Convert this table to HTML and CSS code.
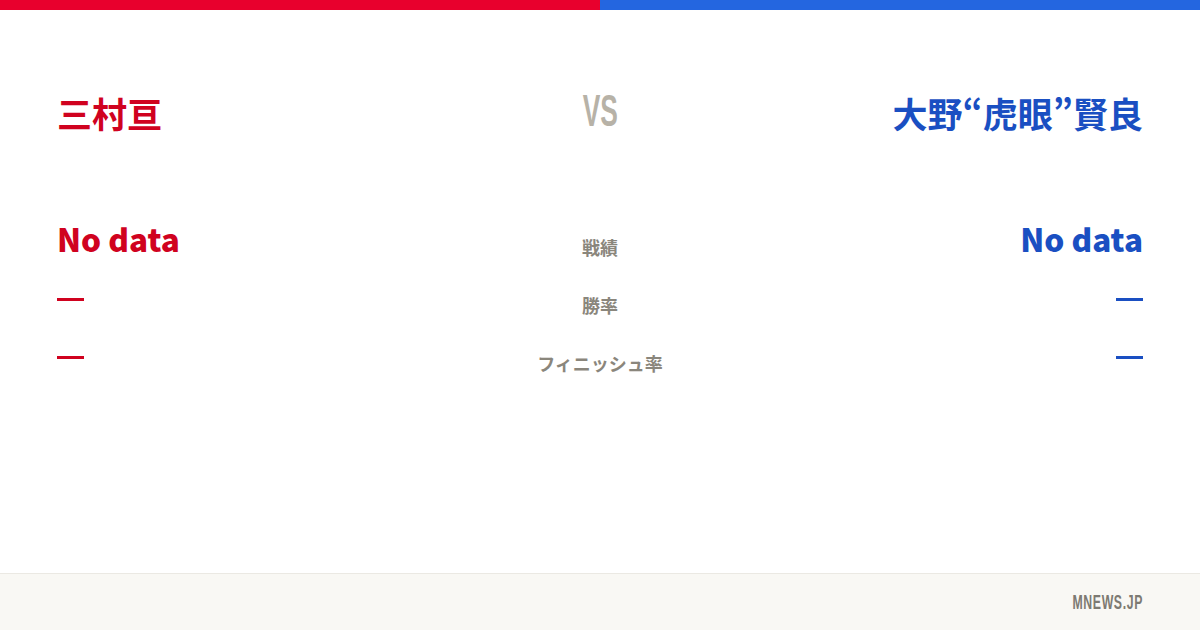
FILE: index.html
```html
<!DOCTYPE html>
<html lang="ja">
<head>
  <meta charset="UTF-8" />
  <meta name="viewport" content="width=device-width, initial-scale=1.0"/>
  <title>三村亘 vs 大野“虎眼”賢良</title>
  <link rel="stylesheet" href="styles.css">
</head>
<body>

  <div class="topbar">
    <div class="bar-red"></div>
    <div class="bar-blue"></div>
  </div>

  <div class="card">
    <div class="names">
      <div class="name red">三村亘</div>
      <div class="vs">VS</div>
      <div class="name blue right">大野“虎眼”賢良</div>
    </div>

    <div class="stats">
      <div class="stat-row first">
        <div class="value big red">No data</div>
        <div class="label">戦績</div>
        <div class="value big blue right">No data</div>
      </div>
      <div class="stat-row">
        <div class="value red"><span class="dash"></span></div>
        <div class="label">勝率</div>
        <div class="value blue right"><span class="dash"></span></div>
      </div>
      <div class="stat-row">
        <div class="value red"><span class="dash"></span></div>
        <div class="label">フィニッシュ率</div>
        <div class="value blue right"><span class="dash"></span></div>
      </div>
    </div>
  </div>

  <div class="footer">
    <span class="brand">MNEWS.JP</span>
  </div>

</body>
</html>
```

FILE: styles.css
```css
body {
  margin: 0;
  width: 1200px;
  height: 630px;
  background-color: #fff;
  font-family: "Noto Sans CJK JP", "Noto Sans", sans-serif;
  display: flex;
  flex-direction: column;
  overflow: hidden;
}

.topbar {
  display: flex;
  height: 10px;
}

.bar-red {
  flex: 1;
  background-color: #e8002d;
}

.bar-blue {
  flex: 1;
  background-color: #2466e0;
}

.card {
  flex: 1;
  padding: 0 57px;
}

.red {
  color: #d0021f;
}

.blue {
  color: #1a4fc2;
}

.right {
  text-align: right;
}

.names {
  display: grid;
  grid-template-columns: 1fr auto 1fr;
  align-items: center;
  margin-top: 81px;
  height: 44px;
}

.name {
  font-size: 35px;
  font-weight: 700;
  line-height: 44px;
}

.vs {
  font-family: "Liberation Sans Narrow", "Liberation Sans", sans-serif;
  font-weight: 700;
  font-size: 44px;
  color: #b7b2a7;
  line-height: 44px;
  transform: scaleX(0.6) translateY(-2px);
}

.stats {
  margin-top: 83px;
}

.stat-row {
  display: grid;
  grid-template-columns: 1fr auto 1fr;
  align-items: center;
  height: 58px;
}

.value {
  font-size: 31.5px;
  font-weight: 900;
  line-height: 40px;
}

.big {
  transform: translateY(-9px);
}

.dash {
  display: inline-block;
  width: 27px;
  height: 3px;
  background-color: currentColor;
  vertical-align: middle;
  transform: translateY(-11px);
}

.label {
  font-size: 18px;
  font-weight: 700;
  color: #8a867c;
  text-align: center;
}

.footer {
  height: 56px;
  background-color: #f9f8f4;
  border-top: 1px solid #ebe9e3;
  display: flex;
  align-items: center;
  justify-content: flex-end;
  padding: 0 57px;
}

.brand {
  font-family: "Liberation Sans Narrow", "Liberation Sans", sans-serif;
  font-weight: 700;
  font-size: 19.5px;
  letter-spacing: 1px;
  color: #7d7a72;
  display: inline-block;
  transform: scaleX(0.63);
  transform-origin: right center;
}
```
